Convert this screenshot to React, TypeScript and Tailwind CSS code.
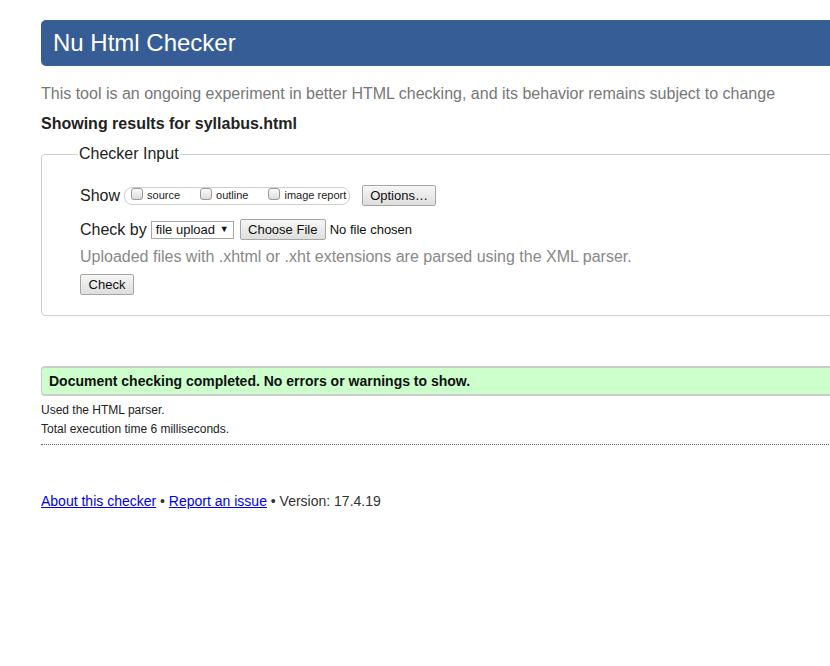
import React from "react";

function Box({ label }: { label: string }) {
  return (
    <label className="flex items-center">
      <span className="mb-[3px] h-[12px] w-[12px] rounded-[3px] border border-[#9a9a9a] bg-gradient-to-b from-[#fcfcfc] to-[#dcdcdc]" />
      <span className="ml-[4px] text-[11px] text-[#222]">{label}</span>
    </label>
  );
}

function Btn({ children, className = "" }: { children: React.ReactNode; className?: string }) {
  return (
    <button
      className={`h-[21px] rounded-[2px] border border-[#a6a6a6] bg-gradient-to-b from-[#f6f6f6] to-[#dedede] px-[7px] text-[13px] leading-[19px] text-[#111] ${className}`}
    >
      {children}
    </button>
  );
}

export default function App() {
  return (
    <div className="h-[666px] w-[830px] overflow-hidden bg-white font-['Liberation_Sans',Arial,sans-serif]">
      <div className="ml-[41px] w-[1000px] pt-[20px]">
        <h1 className="h-[46px] rounded-l-[5px] bg-[#365d95] pl-[12px] text-[24px] leading-[46px] text-white">
          Nu Html Checker
        </h1>
        <p className="mt-[18px] text-[16px] leading-[20px] text-[#777]">
          This tool is an ongoing experiment in better HTML checking, and its behavior remains subject to change
        </p>
        <p className="mt-[10px] text-[16px] font-bold leading-[20px] text-[#222]">
          Showing results for syllabus.html
        </p>

        <fieldset className="mt-[11px] h-[171px] rounded-[4px] border border-[#cfcfcf]">
          <legend className="ml-[36px] px-[1px] text-[16px] leading-[18px] text-[#222]">Checker Input</legend>
          <div className="pl-[38px]">
            <div className="flex items-center pt-[22px]">
              <span className="text-[16px] leading-[20px] text-[#222]">Show</span>
              <div className="ml-[4px] flex h-[18px] w-[226px] items-center gap-[20px] rounded-[8px] border border-[#cfcfcf] pl-[6px]">
                <Box label="source" />
                <Box label="outline" />
                <Box label="image report" />
              </div>
              <Btn className="ml-[12px] w-[74px]">Options…</Btn>
            </div>
            <div className="mt-[13px] flex items-center">
              <span className="text-[16px] leading-[20px] text-[#222]">Check by</span>
              <div className="ml-[4px] flex h-[18px] w-[83px] items-center justify-between border border-[#a6a6a6] bg-white pl-[4px] pr-[4px] text-[13px] text-[#111]">
                <span>file upload</span>
                <span className="text-[9px]">▼</span>
              </div>
              <Btn className="ml-[6px] w-[86px]">Choose File</Btn>
              <span className="ml-[4px] text-[13px] text-[#111]">No file chosen</span>
            </div>
            <p className="mt-[7px] text-[16px] leading-[20px] text-[#888]">
              Uploaded files with .xhtml or .xht extensions are parsed using the XML parser.
            </p>
            <Btn className="mt-[7px] w-[54px]">Check</Btn>
          </div>
        </fieldset>

        <div className="mt-[50px] h-[30px] rounded-l-[4px] border-y-2 border-l border-[#cccccc] bg-[#ccffcc] pl-[7px] text-[14px] font-bold leading-[26px] text-[#111]">
          Document checking completed. No errors or warnings to show.
        </div>
        <p className="mt-[5px] text-[12px] leading-[19px] text-[#222]">Used the HTML parser.</p>
        <p className="text-[12px] leading-[19px] text-[#222]">Total execution time 6 milliseconds.</p>
        <div className="mt-[5px] border-t border-dotted border-[#666]" />

        <p className="mt-[47px] text-[14px] leading-[18px] text-[#333]">
          <a href="#" className="text-[#0000ee] underline">About this checker</a>
          {" • "}
          <a href="#" className="text-[#0000ee] underline">Report an issue</a>
          {" • Version: 17.4.19"}
        </p>
      </div>
    </div>
  );
}
